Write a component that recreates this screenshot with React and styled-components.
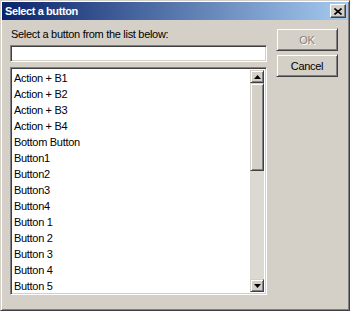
import React from 'react';
import styled, { createGlobalStyle } from 'styled-components';

const GlobalStyle = createGlobalStyle`
  html, body {
    margin: 0;
    padding: 0;
    background: #d4d0c8;
  }
  body {
    font-family: "Liberation Sans", Arial, sans-serif;
  }
`;

const colors = {
  face: '#d4d0c8',
  light: '#ffffff',
  shadow: '#808080',
  dark: '#404040',
  text: '#000000',
};

const Window = styled.div`
  width: 350px;
  height: 311px;
  box-sizing: border-box;
  background: ${colors.face};
  border: 1px solid;
  border-color: ${colors.face} ${colors.dark} ${colors.dark} ${colors.face};
  box-shadow: inset 1px 1px 0 ${colors.light}, inset -1px -1px 0 ${colors.shadow};
  padding: 1px;
  display: flex;
  flex-direction: column;
`;

const TitleBar = styled.div`
  height: 18px;
  display: flex;
  align-items: center;
  justify-content: space-between;
  padding: 0 2px 0 3px;
  background: linear-gradient(to right, #0a246a, #a6caf0);
`;

const Title = styled.span`
  color: #fff;
  font-weight: bold;
  font-size: 11px;
  letter-spacing: -0.4px;
  line-height: 18px;
`;

const CloseButton = styled.div`
  width: 14px;
  height: 12px;
  background: ${colors.face};
  border: 1px solid;
  border-color: ${colors.light} ${colors.dark} ${colors.dark} ${colors.light};
  box-shadow: inset -1px -1px 0 ${colors.shadow};
  display: flex;
  align-items: center;
  justify-content: center;
`;

const Body = styled.div`
  flex: 1;
  display: flex;
  padding: 7px 8px 0 8px;
`;

const LeftColumn = styled.div`
  width: 257px;
  display: flex;
  flex-direction: column;
`;

const Label = styled.div`
  font-size: 11px;
  letter-spacing: -0.3px;
  line-height: 14px;
  color: ${colors.text};
  padding-left: 1px;
  margin-bottom: 4px;
`;

const Sunken = styled.div`
  box-sizing: border-box;
  background: #fff;
  border: 1px solid;
  border-color: ${colors.shadow} ${colors.light} ${colors.light} ${colors.shadow};
  box-shadow: inset 1px 1px 0 ${colors.dark}, inset -1px -1px 0 ${colors.face};
`;

const TextField = styled(Sunken)`
  height: 17px;
  margin-bottom: 5px;
`;

const ListBox = styled(Sunken)`
  height: 228px;
  padding: 2px;
  display: flex;
`;

const Items = styled.div`
  flex: 1;
  overflow: hidden;
`;

const Item = styled.div`
  height: 16px;
  line-height: 16px;
  font-size: 11px;
  letter-spacing: -0.3px;
  padding-left: 1px;
  color: ${colors.text};
  white-space: nowrap;
`;

const ScrollBar = styled.div`
  width: 14px;
  display: flex;
  flex-direction: column;
  background: #dcd9d3;
`;

const Raised = styled.div`
  box-sizing: border-box;
  background: ${colors.face};
  border: 1px solid;
  border-color: ${colors.face} ${colors.dark} ${colors.dark} ${colors.face};
  box-shadow: inset 1px 1px 0 ${colors.light}, inset -1px -1px 0 ${colors.shadow};
`;

const ArrowButton = styled(Raised)`
  height: 13px;
  display: flex;
  align-items: center;
  justify-content: center;
`;

const Thumb = styled(Raised)`
  height: 88px;
`;

const Track = styled.div`
  flex: 1;
`;

const RightColumn = styled.div`
  margin-left: 9px;
  padding-top: 1px;
  display: flex;
  flex-direction: column;
  gap: 3px;
`;

const Button = styled(Raised)`
  width: 62px;
  height: 23px;
  display: flex;
  align-items: center;
  justify-content: center;
  font-size: 11px;
  letter-spacing: -0.3px;
  color: ${p => (p.disabled ? colors.shadow : colors.text)};
  text-shadow: ${p => (p.disabled ? `1px 1px 0 ${colors.light}` : 'none')};
`;

const Arrow = ({ down }) => (
  <svg width="7" height="4" viewBox="0 0 7 4">
    <path d={down ? 'M0 0h7L3.5 4z' : 'M3.5 0L7 4H0z'} fill="#000" />
  </svg>
);

const items = [
  'Action + B1',
  'Action + B2',
  'Action + B3',
  'Action + B4',
  'Bottom Button',
  'Button1',
  'Button2',
  'Button3',
  'Button4',
  'Button 1',
  'Button 2',
  'Button 3',
  'Button 4',
  'Button 5',
];

const App = () => (
  <>
    <GlobalStyle />
    <Window>
      <TitleBar>
        <Title>Select a button</Title>
        <CloseButton>
          <svg width="8" height="7" viewBox="0 0 8 7">
            <path d="M0.5 0.5L7.5 6.5M7.5 0.5L0.5 6.5" stroke="#000" strokeWidth="1.6" />
          </svg>
        </CloseButton>
      </TitleBar>
      <Body>
        <LeftColumn>
          <Label>Select a button from the list below:</Label>
          <TextField />
          <ListBox>
            <Items>
              {items.map(name => (
                <Item key={name}>{name}</Item>
              ))}
            </Items>
            <ScrollBar>
              <ArrowButton>
                <Arrow />
              </ArrowButton>
              <Thumb />
              <Track />
              <ArrowButton>
                <Arrow down />
              </ArrowButton>
            </ScrollBar>
          </ListBox>
        </LeftColumn>
        <RightColumn>
          <Button disabled>OK</Button>
          <Button>Cancel</Button>
        </RightColumn>
      </Body>
    </Window>
  </>
);

export default App;
